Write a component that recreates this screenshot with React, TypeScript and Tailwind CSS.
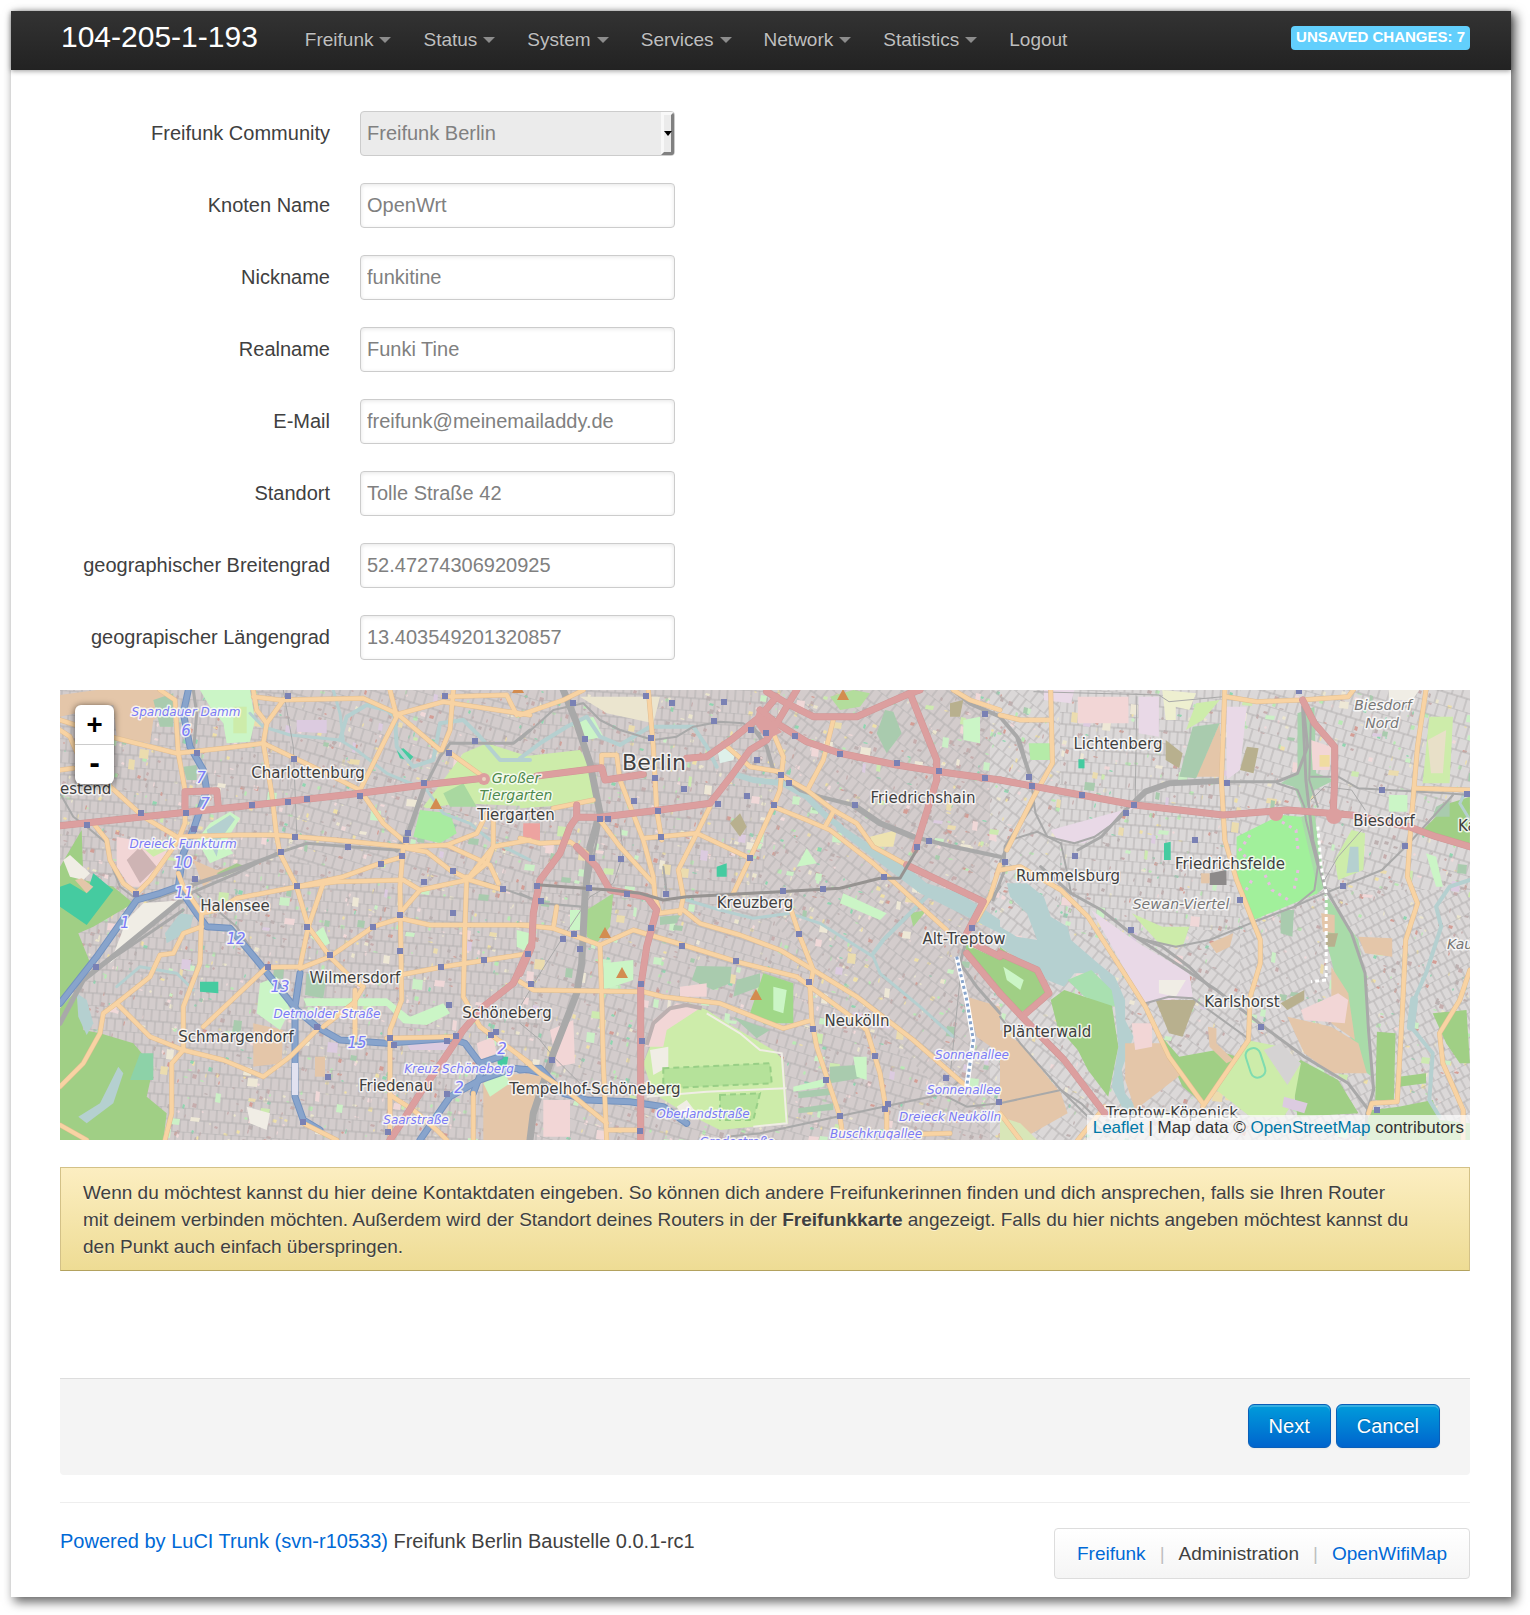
import React from "react";

/* ---------- Map data: three tiles, each with its own local grid ---------- */

type Tile = "W" | "C" | "E";
type Feature = [Tile, string, string?, number?];

function toMap(tile: Tile, pts: string): string {
  const n = pts.trim().split(/\s+/).map(Number);
  const out: string[] = [];
  for (let i = 0; i < n.length; i += 2) {
    const y = (n[i + 1] - 30) / 3;
    const x = tile === "W" ? (n[i] - 30) / 3 : tile === "C" ? 460 + n[i] / 3 : 940 + n[i] / 2.958;
    out.push(x.toFixed(1) + "," + y.toFixed(1));
  }
  return out.join(" ");
}

const SAND = "#e4c6a9";
const FOREST = "#a0cf85";
const PARK = "#cdecaa";
const MINT = "#cbf5c6";
const CEM = "#a9cbae";
const WATER = "#b5d0d0";
const IND = "#e9d9e7";
const OLIVE = "#b8b08e";
const PINK = "#f2d6d6";
const BEIGE = "#f0ede5";
const TEAL = "#45cba0";

const areas: Feature[] = [
  ["W", "30 45 140 30 330 30 375 80 310 120 300 190 200 170 190 75 30 110", SAND],
  ["W", "310 60 370 40 370 140 330 140", CEM],
  ["W", "450 30 600 30 615 120 600 185 530 190 520 130 480 80", MINT],
  ["W", "550 80 590 80 590 160 550 160", PARK],
  ["W", "30 560 95 450 100 600 190 620 250 670 130 740 85 760 125 860 90 900 30 980", FOREST],
  ["W", "30 985 80 930 100 1050 150 1060 250 1090 310 1160 290 1250 350 1300 340 1380 30 1380", FOREST],
  ["W", "40 540 60 525 120 580 100 600 60 590", BEIGE],
  ["W", "30 620 60 610 110 640 130 580 190 630 110 735 30 680", TEAL],
  ["W", "75 600 110 640 130 620 95 595", SAND],
  ["W", "205 1160 220 1180 190 1270 110 1330 85 1310 150 1270", WATER],
  ["W", "80 940 110 960 130 1030 110 1065 85 1010", WATER],
  ["W", "390 700 430 705 420 750 350 790 345 760", WATER],
  ["W", "540 395 570 415 525 490 550 520 480 550 440 480 480 430", MINT],
  ["W", "540 405 555 418 510 480 500 530 480 490 470 450", WATER],
  ["W", "200 470 350 500 340 560 290 620 240 620 200 560", PINK],
  ["W", "230 540 270 500 320 560 270 610", "#ceb4b4"],
  ["W", "280 505 340 480 350 510 310 530", PARK],
  ["W", "280 670 400 660 180 850 230 720", BEIGE],
  ["W", "430 540 500 570 540 560 460 620", SAND],
  ["W", "500 580 560 550 590 560 520 590", "#a5c890"],
  ["W", "240 1200 270 1120 310 1120 310 1200", "#8dd2a8"],
  ["W", "450 905 505 905 505 940 450 935", TEAL],
  ["W", "610 1030 700 1050 695 1150 610 1160", SAND],
  ["W", "795 1130 825 1130 825 1190 795 1190", SAND],
  ["W", "770 880 830 890 820 955 765 945", CEM],
  ["W", "760 955 1010 955 1080 1010 1180 970 1200 1000 1130 1035 1060 1030 1010 978 770 978", MINT],
  ["W", "630 910 680 890 720 990 690 1050 620 1000", MINT],
  ["W", "1120 380 1240 220 1310 190 1440 230 1470 380 1230 370 1130 385", PARK],
  ["W", "1110 390 1200 400 1220 460 1170 490 1090 470", "#a8eba0"],
  ["W", "1180 340 1240 310 1280 380 1200 380", "#a9d8a0"],
  ["W", "1300 1190 1440 1180 1440 1380 1300 1380", SAND],
  ["W", "740 120 830 120 830 160 740 155", "#dccbe0"],
  ["W", "1070 1090 1200 1085 1200 1110 1080 1110", "#dccbe0"],
  ["W", "780 770 820 740 840 790 820 800", MINT],
  ["W", "1280 1090 1330 1070 1340 1120 1290 1140", PINK],
  ["W", "1300 1210 1360 1170 1380 1210 1320 1250", MINT],
  ["W", "1340 1130 1375 1130 1370 1160 1345 1160", TEAL],
  ["W", "1040 210 1060 205 1090 230 1080 242 1050 235", TEAL],
  ["W", "590 1280 660 1300 650 1350 600 1330", BEIGE],
  ["W", "1400 750 1440 760 1440 820 1400 800", MINT],
  ["W", "1420 440 1440 430 1440 490 1420 480", "#eda3a0"],
  ["W", "400 260 440 255 440 300 410 300", CEM],
  ["C", "0 230 180 210 230 290 225 370 0 385", PARK],
  ["C", "150 130 220 110 250 170 200 180", MINT],
  ["C", "180 50 420 50 400 130 260 100", "#ebe5cf"],
  ["C", "10 430 60 430 60 480 10 480", "#eda3a0"],
  ["C", "390 1100 430 1000 510 970 560 990 640 1040 760 1110 790 1140 805 1330 600 1350 480 1290 400 1240 370 1150", PARK],
  ["C", "375 1100 400 1020 470 970 540 985 440 1050 430 1100", PINK],
  ["C", "390 1110 445 1100 445 1160 400 1185", BEIGE],
  ["C", "470 1280 500 1260 530 1300 490 1310", BEIGE],
  ["C", "430 1165 750 1150 755 1210 430 1225", "#b5e29a"],
  ["C", "600 1245 720 1240 700 1320 600 1320", "#b5e29a"],
  ["C", "530 858 635 860 630 910 580 930 515 900", CEM],
  ["C", "650 900 720 880 720 920 640 950", CEM],
  ["C", "640 1010 750 1050 710 1075", CEM],
  ["C", "930 1160 1010 1155 1020 1195 930 1210", CEM],
  ["C", "835 1235 930 1225 930 1245 835 1255", CEM],
  ["C", "835 1285 940 1270 940 1290 835 1300", CEM],
  ["C", "1070 160 1095 90 1120 95 1145 160 1100 220", CEM],
  ["C", "1000 30 1050 40 1020 80 960 90 930 50", "#b3dd9c"],
  ["C", "1330 120 1380 110 1380 190 1330 180", MINT],
  ["C", "730 880 820 910 820 1030 760 1030 690 1000", "#a0d888"],
  ["C", "760 920 800 930 790 1000 760 990", MINT],
  ["C", "250 850 340 840 340 900 250 930", MINT],
  ["C", "200 690 280 640 270 740 230 790 200 770", "#a8d690"],
  ["C", "150 690 185 690 180 750 150 750", MINT],
  ["C", "860 505 890 550 830 560", MINT],
  ["C", "970 640 1100 700 1080 720 960 670", MINT],
  ["C", "1170 700 1220 690 1180 740", "#a8d690"],
  ["C", "1330 790 1440 840 1440 930 1350 840", FOREST],
  ["C", "820 1220 920 1195 910 1220 820 1235", MINT],
  ["C", "420 710 480 705 470 730 420 735", CEM],
  ["C", "480 920 560 910 560 950 480 950", PINK],
  ["C", "90 1050 160 1020 165 1150 110 1160", PINK],
  ["C", "0 1180 70 1190 40 1280 0 1330", SAND],
  ["C", "1340 950 1440 980 1440 1120 1370 1070", SAND],
  ["C", "70 1260 150 1260 150 1370 70 1370", PINK],
  ["C", "590 200 650 210 640 240 600 250", "#def0ea"],
  ["C", "1050 470 1130 450 1120 500 1060 500", "#eee3b0"],
  ["C", "630 430 660 400 680 440 660 470", OLIVE],
  ["C", "1000 1130 1040 1130 1040 1200 1010 1190", MINT],
  ["C", "590 560 620 550 620 590 590 590", TEAL],
  ["C", "1290 70 1330 60 1320 110 1290 110", OLIVE],
  ["C", "940 420 1060 500 1160 560 1220 610 1320 640 1440 720 1440 760 1360 720 1200 640 1120 580 1040 520 950 450", WATER],
  ["E", "20 610 80 610 130 650 150 710 200 740 210 780 290 850 340 890 370 960 370 1020 395 1070 360 1170 370 1240 410 1290 400 1310 360 1280 330 1220 350 1100 340 980 290 880 220 880 190 920 140 900 90 860 0 800 0 740 50 770 110 780 80 700 30 650", WATER],
  ["E", "190 930 250 950 330 970 350 1100 320 1250 260 1170 230 1110 170 1040 150 960", FOREST],
  ["E", "200 900 270 870 330 930 340 980 250 950", "#a9e0b0"],
  ["E", "0 800 60 850 110 880 140 940 60 1000 0 940", FOREST],
  ["E", "10 860 70 900 60 930 20 900", MINT],
  ["E", "465 1055 530 1130 640 1110 700 1130 640 1230 600 1270 540 1220", FOREST],
  ["E", "830 1180 890 1140 1000 1200 1060 1300 880 1310 870 1240", FOREST],
  ["E", "1115 1055 1170 1060 1165 1265 1110 1260", FOREST],
  ["E", "1280 1000 1380 990 1390 1150 1360 1150 1320 1090", FOREST],
  ["E", "1250 450 1330 370 1390 350 1390 490 1310 480", FOREST],
  ["E", "1180 1190 1260 1180 1260 1210 1180 1220", FOREST],
  ["E", "1180 1280 1280 1260 1300 1320 1390 1330 1390 1380 1060 1380 1100 1290", FOREST],
  ["E", "1290 380 1330 360 1330 410 1280 410", CEM],
  ["E", "700 1140 730 1080 830 1100 890 1150 870 1260 840 1310 740 1310 640 1230", PARK],
  ["E", "780 1110 830 1090 890 1150 850 1215", "#d5d3d3"],
  ["E", "840 1250 910 1270 900 1300 835 1280", "#dccbe0"],
  ["E", "700 470 830 405 890 410 940 560 940 640 750 720 700 600", "#a1f09b"],
  ["E", "890 410 930 400 962 620 940 640 925 560", "#a9dba9"],
  ["E", "960 640 1060 780 1080 900 1100 1190 1060 1160 1020 1000 970 800", "#a9dba9"],
  ["E", "880 100 930 80 935 280 990 300 930 330 900 400 870 320 830 310 880 280", "#a9d2ae"],
  ["E", "850 1010 980 1040 1060 1090 1085 1180 980 1180 900 1120", SAND],
  ["E", "650 130 655 290 580 290", SAND],
  ["E", "980 860 1030 940 1050 1080 980 1030", SAND],
  ["E", "370 1090 480 1090 540 1180 400 1290 370 1200", SAND],
  ["E", "0 1050 60 1090 180 1240 200 1300 60 1380 0 1300", SAND],
  ["E", "1060 770 1160 775 1160 830 1080 820", SAND],
  ["E", "620 790 690 760 680 800 640 820", SAND],
  ["E", "950 700 990 705 990 760 955 755", SAND],
  ["E", "615 1040 640 1045 640 1090 690 1140 670 1150 620 1100", SAND],
  ["E", "570 140 650 130 580 295 530 290", CEM],
  ["E", "830 690 870 690 865 770 830 760", CEM],
  ["E", "670 80 730 80 710 270 670 300", IND],
  ["E", "270 690 410 790 560 880 570 950 430 970 370 870", IND],
  ["E", "150 450 400 380 250 490 170 480", IND],
  ["E", "410 50 470 50 470 170 410 160", IND],
  ["E", "130 30 220 30 210 70 130 60", IND],
  ["E", "490 180 540 220 530 265 490 240", OLIVE],
  ["E", "460 960 580 960 540 1070 500 1060", OLIVE],
  ["E", "730 200 765 205 750 280 710 270", OLIVE],
  ["E", "830 970 900 930 900 960 850 990", OLIVE],
  ["E", "965 760 1000 760 990 800 965 800", OLIVE],
  ["E", "990 540 1040 450 1080 460 1075 570 1000 600", PARK],
  ["E", "1035 500 1060 500 1062 575 1025 580", WATER],
  ["E", "1150 345 1205 345 1205 395 1150 395", MINT],
  ["E", "480 30 580 40 560 90 520 80 520 120 490 120", "#eeefd0"],
  ["E", "580 70 650 60 600 120 550 150", PARK],
  ["E", "230 50 380 50 380 130 230 130", PINK],
  ["E", "920 180 980 200 975 270 925 270", PINK],
  ["E", "945 225 975 225 975 260 945 260", "#f0dca0"],
  ["E", "1270 110 1340 110 1330 310 1250 310", PARK],
  ["E", "1265 180 1320 150 1310 280 1275 280", "#e8e0c8"],
  ["E", "1150 30 1240 30 1220 60 1150 60", BEIGE],
  ["E", "85 190 150 190 150 240 90 240", "#b5eba8"],
  ["E", "390 700 480 740 560 740 540 800 470 790", PARK],
  ["E", "620 580 670 570 670 615 620 615", "#8d8a8a"],
  ["E", "595 580 620 580 620 610 595 610", SAND],
  ["E", "485 490 505 485 505 540 485 540", TEAL],
  ["E", "232 238 250 238 250 265 232 265", TEAL],
  ["E", "890 990 1000 940 1030 960 1020 1030 900 1020", PINK],
  ["E", "390 1030 450 1030 450 1100 400 1110", PINK],
  ["E", "470 900 550 900 520 950 470 940", BEIGE],
  ["E", "1260 520 1290 530 1310 620 1290 620", MINT],
  ["E", "0 1310 60 1330 110 1380 0 1380", "#d8e6b8"],
];

const water: Feature[] = [
  ["W", "600 100 640 140 720 165 870 180 920 210 1010 280 1130 330 1180 400 1260 430 1320 480 1440 540", WATER, 3],
  ["W", "870 180 890 110 950 75 1010 90 1035 110 1040 200 1090 260 1150 240 1170 130 1240 120 1290 170 1350 240 1440 240", WATER, 4],
  ["W", "850 30 870 100 880 180", WATER, 3],
  ["W", "200 920 270 860 380 880 430 930", WATER, 3],
  ["C", "0 235 60 190 140 140 200 110 240 170 300 195 390 140 520 140 560 200 590 260", WATER, 4],
  ["C", "650 285 700 300 790 310 860 350 920 410 960 440", WATER, 6],
  ["C", "500 660 600 690 700 715 810 700 900 730 1060 830 1080 880 1200 980 1300 1070", WATER, 3],
  ["C", "1060 820 1090 780 1230 640", WATER, 4],
  ["E", "1390 600 1330 620 1290 680 1305 740 1260 880 1225 960 1215 1040 1280 1120 1270 1260 1300 1310", WATER, 4],
  ["E", "1225 960 1215 1040", WATER, 8],
  ["E", "1380 330 1360 370 1390 420", WATER, 3],
];

const rails: Feature[] = [
  ["W", "1440 150 1390 190 1200 190 1170 230 1120 330 1075 460 1040 510 900 500 770 490 680 520 560 580 420 640", "", 3],
  ["W", "1120 330 1075 460 1040 510", "", 5],
  ["W", "690 520 500 590 440 610 300 660", "", 4],
  ["W", "420 640 200 820 100 900 30 1030", "", 5],
  ["W", "400 690 180 840 130 870", "", 3],
  ["W", "30 340 70 410 110 440 170 490 190 570 210 620 250 650 330 640 430 620", "", 2],
  ["W", "1300 605 1440 655", "", 2],
  ["W", "700 30 730 200 740 460", "", 1],
  ["W", "430 30 440 100 430 220", "", 3],
  ["W", "440 640 560 740 600 800", "", 2],
  ["C", "130 30 170 130 210 250 240 400 210 500 195 650 185 850 170 940 100 1120 40 1300 30 1380", "", 7],
  ["C", "0 180 100 90 190 70 240 120 300 150 400 180 470 170 520 140 600 125 670 130 720 160", "", 2],
  ["C", "690 130 740 200 760 270 840 330 900 350 1000 375 1080 430 1180 470 1300 500 1440 530", "", 4],
  ["C", "1000 375 1080 430 1180 470", "", 6],
  ["C", "0 640 70 670 190 680 215 560 240 430", "", 2],
  ["C", "0 980 60 880 130 770 210 650", "", 1],
  ["C", "300 440 310 520 280 610 210 650", "", 1],
  ["C", "430 560 440 640", "", 2],
  ["C", "1440 620 1350 740 1320 850 1370 920 1440 1000", "", 3],
  ["C", "620 1370 720 1360 860 1330 1090 1280 1280 1240 1320 1200", "", 2],
  ["C", "1280 1250 1340 1280 1440 1270", "", 2],
  ["C", "1290 1190 1320 900 1320 850", "", 1],
  ["C", "0 1030 60 1080 100 1130 220 1250", "", 1],
  ["E", "0 110 60 180 90 290 105 400 140 470 220 490 280 470 350 420 400 360", "", 2],
  ["E", "-140 30 -90 70 0 110 50 170 90 290", "", 4],
  ["E", "400 365 430 335 500 310 650 303", "", 6],
  ["E", "230 510 300 470 370 390 400 365", "", 3],
  ["E", "640 305 820 305 880 280 910 200 895 60", "", 3],
  ["E", "895 80 905 300 925 480 960 620 1040 760 1080 880 1090 1050 1105 1230 1085 1300 1080 1380", "", 3],
  ["E", "920 100 915 300 940 380", "", 2],
  ["E", "820 310 880 330 900 380 905 420 940 560 930 630 870 680", "", 2],
  ["E", "920 290 1000 290 1060 325 1150 330 1320 340 1390 345", "", 2],
  ["E", "920 360 960 320 1040 330 1080 390", "", 1],
  ["E", "1340 345 1200 500 1130 570 1010 620 960 640 870 680 740 730 620 780 520 800 410 775", "", 2],
  ["E", "120 560 210 640 300 690 400 770 520 850 640 930 780 1040 900 1130 1030 1210 1090 1290", "", 3],
  ["E", "400 770 480 800 560 860 620 920", "", 3],
  ["E", "180 490 195 560 210 640", "", 2],
  ["E", "1070 450 1000 530 960 600", "", 1],
  ["E", "430 970 500 950 570 955 740 1080", "", 2],
  ["E", "0 545 30 480 110 455 180 490", "", 2],
  ["E", "100 370 15 500 10 580 -20 660", "", 3],
  ["E", "0 1270 180 1230 240 1270 300 1330", "", 2],
  ["E", "0 1010 60 1090 180 1230 300 1350", "", 2],
  ["E", "100 35 470 45 500 65 660 50", "", 1],
  ["E", "405 50 400 360", "", 1],
];

const elevated: Feature[] = [
  ["C", "60 615 270 630 360 640 430 660 500 650 780 635 960 625 1080 595 1140 595 1190 510"],
];

const motorways: Feature[] = [
  ["W", "415 30 400 100 420 200 460 270 470 330 430 450 400 520 385 620 440 700 470 740 540 745 620 840 740 990 800 1040 870 1080 1010 1090 1200 1075 1245 1090 1290 1150 1350 1130"],
  ["W", "750 880 735 980 735 1250 760 1320 810 1350"],
  ["W", "385 620 330 640 260 660 140 830 30 970"],
  ["W", "1300 1160 1270 1240"],
  ["W", "1110 1380 1200 1250 1290 1200 1390 1165 1440 1170 1480 1180"],
  ["C", "0 1170 60 1165 130 1240 200 1260 330 1265 430 1280 500 1330"],
];

const primaries: Feature[] = [
  ["W", "30 437 280 410 410 397 700 365 930 340 1120 315 1300 295"],
  ["W", "405 397 405 335 500 332 505 380"],
  ["W", "1440 800 1390 910 1300 980 1240 1050 1180 1140 1110 1240 1060 1320 1020 1380"],
  ["C", "50 288 245 263 255 300 370 283"],
  ["C", "500 235 560 230 640 175 720 110 770 50"],
  ["C", "720 90 770 130 860 185 960 220 1130 255 1260 275 1440 300"],
  ["C", "830 30 740 180 690 210 640 280 570 370 420 390 240 412 170 412 150 440 120 520 60 600 40 700 35 800 0 880"],
  ["C", "170 375 170 412"],
  ["C", "170 500 230 560 270 630 380 650 410 690 380 800 362 920 362 1380"],
  ["C", "740 35 800 70 880 110 1010 110 1170 40 1200 30"],
  ["C", "1170 40 1250 240 1250 300 1200 460 1185 510"],
  ["C", "1160 555 1390 665 1340 760"],
  ["C", "1340 820 1440 940"],
  ["C", "1360 790 1440 830"],
  ["E", "0 300 240 345 400 375 660 405 850 390 1040 405 1210 440 1290 470 1390 500"],
  ["E", "895 60 930 130 990 200 990 300 985 410"],
  ["E", "0 820 110 870 145 940 65 1010 0 940"],
  ["E", "65 1010 190 1140 310 1300"],
];

const secondaries: Feature[] = [
  ["W", "30 150 60 170 90 240 170 310 280 410 380 470 560 465 680 465 860 480 1060 500 1190 495 1320 555 1345 610"],
  ["W", "30 120 200 175 380 220 520 205 640 190 820 275 930 330 1000 430 1070 490"],
  ["W", "330 30 375 60 385 220 405 330 405 430 385 480 300 600 260 640 220 610 180 540 170 480 130 430"],
  ["W", "610 30 620 90 650 130 640 190 665 340 680 470 690 520 740 620 775 740 840 830 910 900 940 920 910 970 820 1040"],
  ["W", "610 50 690 60 940 55 1040 100 1170 210"],
  ["W", "1195 215 1300 290"],
  ["W", "1020 30 1040 110 930 330"],
  ["W", "1210 30 1200 150 1175 210"],
  ["W", "1035 105 1180 65 1440 105"],
  ["W", "1180 50 1370 45 1400 105"],
  ["W", "700 60 650 130"],
  ["W", "30 270 70 265"],
  ["W", "385 580 400 620 455 700 500 690 560 655 740 620 880 590 990 550 1060 530"],
  ["W", "1070 505 1130 515 1200 570 1260 600 1360 630"],
  ["W", "740 620 860 605 1060 600 1110 630 1250 600 1330 500 1440 480"],
  ["W", "1060 500 1050 620 1055 960 1020 1050 1020 1380"],
  ["W", "1110 630 1050 700"],
  ["W", "820 610 775 740 750 860 650 862 460 1040"],
  ["W", "750 865 840 830 970 740 1050 715 1140 735 1440 735"],
  ["W", "1050 885 1180 860 1440 820"],
  ["W", "1250 590 1245 740 1240 950 1290 1040 1440 1150"],
  ["W", "455 740 400 760 370 820 330 825 300 890 200 970 160 1000 150 1060 100 1150 30 1220"],
  ["W", "455 700 450 850 400 980 400 1110 365 1150 365 1300 345 1380"],
  ["W", "200 970 300 1070 400 1110 520 1140 640 1190 720 1130 800 1050"],
  ["W", "30 1335 110 1380"],
  ["W", "1020 1245 1090 1290 1160 1350 1190 1380"],
  ["W", "915 930 915 1080"],
  ["W", "1010 1075 1210 1070"],
  ["W", "760 1330 860 1380"],
  ["W", "1270 1240 1270 1380"],
  ["W", "1330 400 1330 500 1310 550 1250 600"],
  ["W", "1190 495 1280 460 1310 400"],
  ["C", "0 105 130 60 190 30"],
  ["C", "100 385 220 360"],
  ["C", "0 475 60 490 150 485 200 520"],
  ["C", "245 250 245 225 290 225 300 300 370 480 400 590 405 650"],
  ["C", "385 30 400 200 410 390 425 480"],
  ["C", "240 420 300 500 400 610"],
  ["C", "370 475 530 460 690 535"],
  ["C", "570 380 530 460 475 570 490 650 480 700"],
  ["C", "405 650 420 700 490 690 540 730 660 765 780 810 880 870 1010 950 1180 1080 1340 1220"],
  ["C", "760 160 790 230 780 330 760 380 690 535 640 640"],
  ["C", "610 190 690 260 780 275"],
  ["C", "790 290 860 330 940 390 1010 430 1060 500 1170 560"],
  ["C", "865 325 910 240 940 120"],
  ["C", "760 380 860 420 930 450 1060 550 1280 750"],
  ["C", "915 440 940 395"],
  ["C", "810 680 840 770 880 870 870 920 875 1020 790 1045 700 1010 600 970 430 950 370 935 40 930 0 905"],
  ["C", "0 735 100 745 240 795 340 750 490 795 650 845 830 890 980 1000 1040 1050 1080 1180 1100 1300 1100 1380"],
  ["C", "240 795 245 950 250 1150 260 1380"],
  ["C", "875 1020 890 1100 960 1310 970 1380"],
  ["C", "0 1130 60 1180 150 1240 260 1330"],
  ["C", "260 1350 360 1350"],
  ["C", "100 745 110 680"],
  ["C", "1440 555 1410 650 1370 720"],
  ["C", "1300 30 1350 60 1440 90"],
  ["C", "1100 1365 1290 1360"],
  ["E", "150 30 155 250 100 350 20 510"],
  ["E", "0 105 60 120 150 120"],
  ["E", "665 30 655 300 665 480 700 600 770 780 770 850 740 950 735 1080 600 1280"],
  ["E", "670 50 760 65 890 60 1030 50 1045 30"],
  ["E", "1260 30 1235 200 1215 440 1205 590 1235 670 1200 780 1190 1000 1175 1265 1100 1270 1090 1300"],
  ["E", "1225 325 1390 330"],
  ["E", "1390 870 1360 960 1300 1060 1310 1150 1370 1290 1370 1380"],
  ["E", "0 570 60 560 180 630 260 710 380 900 430 980 500 1130 600 1270"],
  ["E", "230 1380 310 1280"],
  ["E", "0 1300 60 1380"],
];

const stations: Feature[] = [
  ["W", "714 47 1186 47 440 218 732 237 1196 218 1276 182 1123 308 930 348 772 358 714 367 606 376 408 398 273 399 111 434 431 448 736 470 894 502 1073 458 1069 479 692 515 1055 529 992 551 1209 574 1123 606 740 619 435 597 259 642 1358 628 1209 700 1051 705 970 741 772 741 840 826 1051 813 1303 840 1173 862 655 862 138 862 1196 975 800 1040 1020 1074 1033 1096 1191 1082 1218 1069 1322 1064 1339 1056 835 1190 1191 1241 759 1325 1015 1357"],
  ["C", "159 70 379 47 456 70 613 65 582 124 195 178 393 174 694 151 739 160 825 169 960 223 1131 250 1257 272 1396 295 1396 102 712 241 784 286 807 308 681 349 595 371 762 376 406 295 492 326 343 362 415 394 240 416 263 416 424 470 217 534 303 538 690 534 1005 376 1226 484 1190 502 1091 592 910 628 789 632 438 641 321 641 208 624 51 619 64 663 392 745 163 763 128 776 181 808 24 822 33 912 362 912 487 799 649 844 838 763 866 907 1356 745 878 1046 366 1082 96 1141 361 1352 919 1200 1064 1128 1278 1195 1104 1272 1095 1286 960 1308 1436 1267"],
  ["E", "86 290 95 318 241 345 397 376 374 398 672 309 885 32 578 480 223 529 15 547 711 660 387 750 1014 619 1199 497 1129 331 1381 341 773 1042 1115 1290"],
];

const peaks: [number, number][] = [[376, 114], [545, 243], [562, 283], [696, 305], [783, 5], [458, -2]];

type Label = [string, number, number, ("start" | "end")?];
const districts: Label[] = [
  ["estend", 0, 104, "start"], ["Charlottenburg", 248, 88], ["Halensee", 175, 221], ["Wilmersdorf", 295, 293],
  ["Schmargendorf", 176, 352], ["Friedenau", 336, 401], ["Schöneberg", 447, 328], ["Tempelhof-Schöneberg", 535, 404],
  ["Tiergarten", 456, 130], ["Friedrichshain", 863, 113], ["Kreuzberg", 695, 218], ["Alt-Treptow", 904, 254],
  ["Neukölln", 797, 336], ["Lichtenberg", 1058, 59], ["Friedrichsfelde", 1170, 179], ["Rummelsburg", 1008, 191],
  ["Biesdorf", 1324, 136], ["Ka", 1398, 141, "start"], ["Karlshorst", 1182, 317], ["Plänterwald", 987, 347],
  ["Treptow-Köpenick", 1112, 428],
];
const junctions: Label[] = [
  ["Spandauer Damm", 126, 26], ["Dreieck Funkturm", 123, 158], ["Detmolder Straße", 267, 328], ["Kreuz Schöneberg", 399, 383],
  ["Saarstraße", 356, 434], ["Sonnenallee", 912, 369], ["Sonnenallee", 904, 404], ["Dreieck Neukölln", 890, 431],
  ["Buschkrugallee", 816, 448], ["Oberlandstraße", 643, 428], ["Gradestraße", 677, 456],
];
const exits: Label[] = [
  ["6", 126, 46], ["7", 141, 93], ["7", 145, 119], ["10", 123, 178], ["11", 124, 208], ["1", 65, 238],
  ["12", 176, 254], ["13", 220, 302], ["15", 297, 358], ["2", 442, 364], ["2", 399, 403],
];
const quarters: Label[] = [
  ["Biesdorf", 1323, 20], ["Nord", 1322, 38], ["Sewan-Viertel", 1121, 219], ["Kau", 1387, 259, "start"],
];

/* Building footprints and small green plots, scattered with a fixed seed. */
function scatter(count: number, colours: string[], size: number, min: number, startSeed: number) {
  let seed = startSeed;
  const rnd = () => {
    seed = (seed * 1103515245 + 12345) % 2147483648;
    return seed / 2147483648;
  };
  const paths = colours.map(() => "");
  for (let i = 0; i < count; i++) {
    const east = rnd() < 0.27;
    const x = Math.round(east ? 930 + rnd() * 480 : rnd() * 950);
    const y = Math.round(rnd() * 450);
    const k = Math.floor(Math.pow(rnd(), 1.4) * colours.length);
    const w = min + Math.floor(rnd() * size);
    const h = min + Math.floor(rnd() * size);
    paths[k] += `M${x} ${y}l${w} 1l-1 ${h}l-${w} -1z`;
  }
  return colours.map((c, i) => ({ c, d: paths[i] }));
}
const plots = scatter(420, ["#cbf0c6", "#eee8d6", "#f0d8d8", "#cdeab0", "#ebdcae", "#dccbe0", "#a9cbae"], 8, 3, 99);
const footprints = scatter(4200, ["#c6adad", "#bdb0b0", "#b9eab4", "#ece6ce", "#d49d95", "#efe0a8", "#8fd6b0", "#f1dada"], 4, 1, 7);

function Lines({ items, colour, width }: { items: Feature[]; colour?: string; width?: number }) {
  return (
    <g fill="none" strokeLinejoin="round" strokeLinecap="round">
      {items.map(([t, p, c, w], i) => (
        <polyline key={i} points={toMap(t, p)} stroke={colour || c || "#a9a9a9"} strokeWidth={width || w} />
      ))}
    </g>
  );
}

function Labels({ items, size, fill, italic }: { items: Label[]; size: number; fill: string; italic?: boolean }) {
  return (
    <g
      fontSize={size}
      fill={fill}
      fontStyle={italic ? "italic" : "normal"}
      stroke="#ffffff"
      strokeOpacity="0.8"
      strokeWidth="3"
      strokeLinejoin="round"
      paintOrder="stroke"
    >
      {items.map(([t, x, y, a], i) => (
        <text key={i} x={x} y={y} textAnchor={a || "middle"}>{t}</text>
      ))}
    </g>
  );
}

function BerlinMap() {
  return (
    <svg
      viewBox="0 0 1410 450"
      preserveAspectRatio="xMidYMid slice"
      className="block h-[450px] w-full font-['DejaVu_Sans',sans-serif]"
      role="img"
      aria-label="Karte von Berlin"
    >
      <defs>
        {[
          ["sa", 8, 12, 4], ["sb", 9, 14, 38], ["sc", 8, 11, -28], ["sd", 10, 13, 17],
        ].map(([id, w, h, r]) => (
          <pattern key={id} id={String(id)} width={Number(w)} height={Number(h) * 2} patternUnits="userSpaceOnUse" patternTransform={`rotate(${r})`}>
            <path d={`M0 0H${w}M0 ${h}H${w}M2 0V${h}M${Number(w) - 2} ${h}V${Number(h) * 2}`} stroke="#b4b1b1" strokeWidth="1" fill="none" />
          </pattern>
        ))}
      </defs>
      <rect width="1410" height="450" fill="#d3cccc" />
      <rect x="930" width="480" height="450" fill="#dbd8d8" />
      {footprints.map((f) => <path key={f.c} d={f.d} fill={f.c} />)}
      <rect width="230" height="450" fill="url(#sa)" />
      <path d="M230 0H480V190L360 200L230 170Z" fill="url(#sd)" />
      <path d="M230 170L360 200L480 190V450H230Z" fill="url(#sa)" />
      <path d="M480 0H720L700 220H480Z" fill="url(#sa)" />
      <path d="M480 220H700L930 450H480Z" fill="url(#sd)" />
      <path d="M720 0H1000V200L930 450L700 220Z" fill="url(#sb)" />
      <path d="M1000 0H1180V240H1000Z" fill="url(#sa)" />
      <path d="M1000 240H1180V450H930L1000 200Z" fill="url(#sb)" />
      <path d="M1180 0H1410V200H1180Z" fill="url(#sd)" />
      <path d="M1180 200H1410V450H1180Z" fill="url(#sc)" />
      {plots.map((f) => <path key={f.c} d={f.d} fill={f.c} />)}

      {areas.map(([t, p, c], i) => <polygon key={i} points={toMap(t, p)} fill={c} />)}
      <g fill="none" stroke="#e5bfe0" strokeWidth="3" strokeDasharray="3 5">
        <path d="M1222 132L1236 140L1238 160M1190 145L1180 160L1188 170M1205 185L1212 200L1232 212M1238 180L1234 200M1186 200L1192 190" />
      </g>
      <g fill="none" stroke="#98cf86" strokeWidth="2" strokeDasharray="6 4">
        <polygon points={toMap("C", "430 1165 750 1150 755 1210 430 1225")} />
        <polygon points={toMap("C", "600 1245 720 1240 700 1320 600 1320")} />
      </g>
      <g fill="none" stroke="#f0ede5" strokeWidth="2">
        <polyline points={toMap("C", "380 1250 560 1235 800 1225")} />
        <polyline points={toMap("C", "560 1000 660 1060 720 1110 785 1120 800 1330 700 1340")} />
      </g>
      <rect x="1188" y="358" width="15" height="30" rx="7" transform="rotate(-18 1195 373)" fill="none" stroke="#7fdcb0" strokeWidth="2" />
      <polyline points={toMap("C", "380 1095 400 1030 450 985 500 975 545 985")} fill="none" stroke="#bcb0b0" strokeWidth="4" />

      <Lines items={water} />
      <Lines items={rails} />
      <Lines items={motorways} colour="#7392bf" width={7} />
      <Lines items={motorways} colour="#88a4cc" width={5} />
      <path d="M235 373V405" stroke="#e2e2f0" strokeWidth="6" />
      <Lines items={secondaries} colour="#e0bd92" width={5} />
      <Lines items={secondaries} colour="#f8d3a3" width={4} />
      <Lines items={primaries} colour="#d19696" width={7} />
      <Lines items={primaries} colour="#dc9f9f" width={6} />
      <Lines items={elevated} colour="#969391" width={3} />
      <polyline points={toMap("C", "1310 830 1340 960 1360 1080 1340 1220")} fill="none" stroke="#ffffff" strokeWidth="5" />
      <polyline points={toMap("C", "1310 830 1340 960 1360 1080 1340 1220")} fill="none" stroke="#88a4cc" strokeWidth="3" strokeDasharray="3 3" />
      <polyline points={toMap("E", "940 440 950 560 965 640 965 900 920 905")} fill="none" stroke="#ffffff" strokeWidth="3" strokeDasharray="4 3" />
      <g fill="#dc9f9f">
        <circle cx="424" cy="89" r="6" />
        <circle cx="1216" cy="124" r="7" />
        <circle cx="1274" cy="126" r="8" />
        <path d="M697 21L712 32L722 42L706 50L694 32Z" />
      </g>
      <circle cx="424" cy="89" r="2" fill="#e8d3c0" />

      <g fill="#7a81b4">
        {stations.flatMap(([t, p]) =>
          toMap(t, p).split(" ").map((pt) => {
            const [x, y] = pt.split(",").map(Number);
            return <rect key={pt} x={Math.round(x) - 3} y={Math.round(y) - 3} width="6" height="6" />;
          }),
        )}
      </g>
      <g fill="#d38c50">
        {peaks.map(([x, y]) => <path key={x} d={`M${x} ${y - 6}L${x + 6} ${y + 5}H${x - 6}Z`} />)}
      </g>

      <Labels items={quarters} size={14} fill="#777777" italic />
      <Labels items={[["Großer", 456, 93], ["Tiergarten", 456, 110]]} size={14} fill="#4e8a4e" italic />
      <Labels items={junctions} size={12} fill="#7b7bf5" italic />
      <Labels items={exits} size={15} fill="#7b7bf8" italic />
      <Labels items={districts} size={15} fill="#404040" />
      <Labels items={[["Berlin", 594, 80]]} size={22} fill="#404040" />
    </svg>
  );
}

/* ------------------------------- Page ------------------------------- */

const menus = ["Freifunk", "Status", "System", "Services", "Network", "Statistics"];

const fields = [
  { id: "hostname", label: "Knoten Name", value: "OpenWrt" },
  { id: "nickname", label: "Nickname", value: "funkitine" },
  { id: "realname", label: "Realname", value: "Funki Tine" },
  { id: "mail", label: "E-Mail", value: "freifunk@meinemailaddy.de" },
  { id: "location", label: "Standort", value: "Tolle Straße 42" },
  { id: "lat", label: "geographischer Breitengrad", value: "52.47274306920925" },
  { id: "lon", label: "geograpischer Längengrad", value: "13.403549201320857" },
];

function Row({ id, label, children }: { id: string; label: string; children: React.ReactNode }) {
  return (
    <div className="flex items-center gap-[30px]">
      <label htmlFor={id} className="w-[270px] shrink-0 text-right whitespace-nowrap">{label}</label>
      {children}
    </div>
  );
}

const control =
  "h-[45px] w-full rounded-[4px] border border-[#cccccc] px-[6px] text-[#808080] outline-none";

const primary =
  "h-11 rounded-[6px] border border-[#0a5fb8] bg-linear-to-b from-[#049cdb] to-[#0064cd] px-5 text-white shadow-[inset_0_2px_0_rgba(255,255,255,0.2),0_1px_2px_rgba(0,0,0,0.05)] text-shadow-[0_-1px_0_rgba(0,0,0,0.25)]";

export default function App() {
  return (
    <div className="bg-white pt-[11px] pr-[19px] pb-[19px] pl-[11px] font-['Liberation_Sans',Arial,sans-serif] text-[20px] leading-[27px] text-[#404040]">
      <div className="bg-white pb-[18px] shadow-[4px_4px_10px_1px_rgba(0,0,0,0.6)]">
        <header className="flex h-[59px] items-start bg-linear-to-b from-[#333333] to-[#222222] pr-[41px] pl-[50px] shadow-[0_1px_5px_rgba(0,0,0,0.4)]">
          <a href="#" className="mt-[11px] text-[30px] leading-[30px] text-white">104-205-1-193</a>
          <nav className="mt-[15px] ml-[47px] flex gap-8 text-[19px] text-[#bfbfbf] text-shadow-[0_-1px_0_rgba(0,0,0,0.25)]">
            {menus.map((m) => (
              <a key={m} href="#" className="flex items-center gap-[6px]">
                {m}
                <span className="h-0 w-0 border-x-6 border-t-6 border-x-transparent border-t-[#8c8c8c]" />
              </a>
            ))}
            <a href="#">Logout</a>
          </nav>
          <a href="#" className="mt-[15px] ml-auto h-6 rounded-[4px] bg-[#62cffc] px-[5px] text-[15px] leading-[22px] font-bold whitespace-nowrap text-white uppercase">
            Unsaved Changes: 7
          </a>
        </header>

        <main className="pt-[41px] pr-[41px] pl-[49px]">
          <form>
            <div className="flex flex-col gap-[27px]">
              <Row id="community" label="Freifunk Community">
                <div className="relative w-[315px]">
                  <select id="community" className={control + " appearance-none bg-[#ebebeb]"}>
                    <option>Freifunk Berlin</option>
                  </select>
                  <span className="pointer-events-none absolute top-px right-px bottom-px flex w-[13px] items-center justify-center rounded-r-[3px] border-3 border-t-[#f8f8f8] border-r-[#808080] border-b-[#808080] border-l-[#f8f8f8] bg-[#ebebeb]">
                    <span className="h-0 w-0 shrink-0 border-x-4 border-t-5 border-x-transparent border-t-black" />
                  </span>
                </div>
              </Row>
              {fields.map((f) => (
                <Row key={f.id} id={f.id} label={f.label}>
                  <div className="w-[315px]">
                    <input id={f.id} defaultValue={f.value} className={control + " bg-white shadow-[inset_0_1px_4px_rgba(0,0,0,0.1)]"} />
                  </div>
                </Row>
              ))}
            </div>

            <div className="relative mt-[30px] overflow-hidden">
              <BerlinMap />
              <div className="absolute top-[15px] left-[15px] flex w-[39px] flex-col overflow-hidden rounded-[6px] bg-white font-['DejaVu_Sans_Mono',monospace] text-[26px] leading-[39px] font-bold text-black shadow-[0_1px_7px_rgba(0,0,0,0.65)]">
                <button type="button" aria-label="Zoom in" className="h-10 border-b border-[#cccccc]">+</button>
                <button type="button" aria-label="Zoom out" className="h-[39px]">-</button>
              </div>
              <div className="absolute right-0 bottom-0 bg-white/70 px-[6px] text-[17px] leading-[25px] text-[#333333]">
                <a href="#" className="text-[#0078a8]">Leaflet</a> | Map data © <a href="#" className="text-[#0078a8]">OpenStreetMap</a> contributors
              </div>
            </div>

            <div className="mt-[27px] border border-[#d3c187] border-b-[#b3a25f] bg-linear-to-b from-[#fceec1] to-[#eedc94] pt-[11px] pr-4 pb-[10px] pl-[22px] text-[19px] text-shadow-[0_1px_0_rgba(255,255,255,0.5)]">
              Wenn du möchtest kannst du hier deine Kontaktdaten eingeben. So können dich andere Freifunkerinnen finden und dich ansprechen, falls sie Ihren Router
              <br />
              mit deinem verbinden möchten. Außerdem wird der Standort deines Routers in der <strong>Freifunkkarte</strong> angezeigt. Falls du hier nichts angeben möchtest kannst du
              <br />
              den Punkt auch einfach überspringen.
            </div>

            <div className="mt-[107px] flex justify-end gap-[5px] rounded-b-[4px] border-t border-[#dddddd] bg-[#f4f4f4] px-[30px] pt-[25px] pb-[27px]">
              <button type="button" className={primary}>Next</button>
              <button type="button" className={primary}>Cancel</button>
            </div>
          </form>

          <footer className="mt-[27px] flex items-start justify-between border-t border-[#eeeeee] pt-[25px]">
            <p>
              <a href="#" className="text-[#0069d6]">Powered by LuCI Trunk (svn-r10533)</a> Freifunk Berlin Baustelle 0.0.1-rc1
            </p>
            <ul className="flex rounded-[4px] border border-[#dddddd] bg-linear-to-b from-white to-[#f5f5f5] px-[22px] py-[11px] text-[19px] text-shadow-[0_1px_0_#ffffff]">
              <li><a href="#" className="text-[#0069d6]">Freifunk</a></li>
              <li className="px-[14px] text-[#bfbfbf]">|</li>
              <li><a href="#">Administration</a></li>
              <li className="px-[14px] text-[#bfbfbf]">|</li>
              <li><a href="#" className="text-[#0069d6]">OpenWifiMap</a></li>
            </ul>
          </footer>
        </main>
      </div>
    </div>
  );
}
